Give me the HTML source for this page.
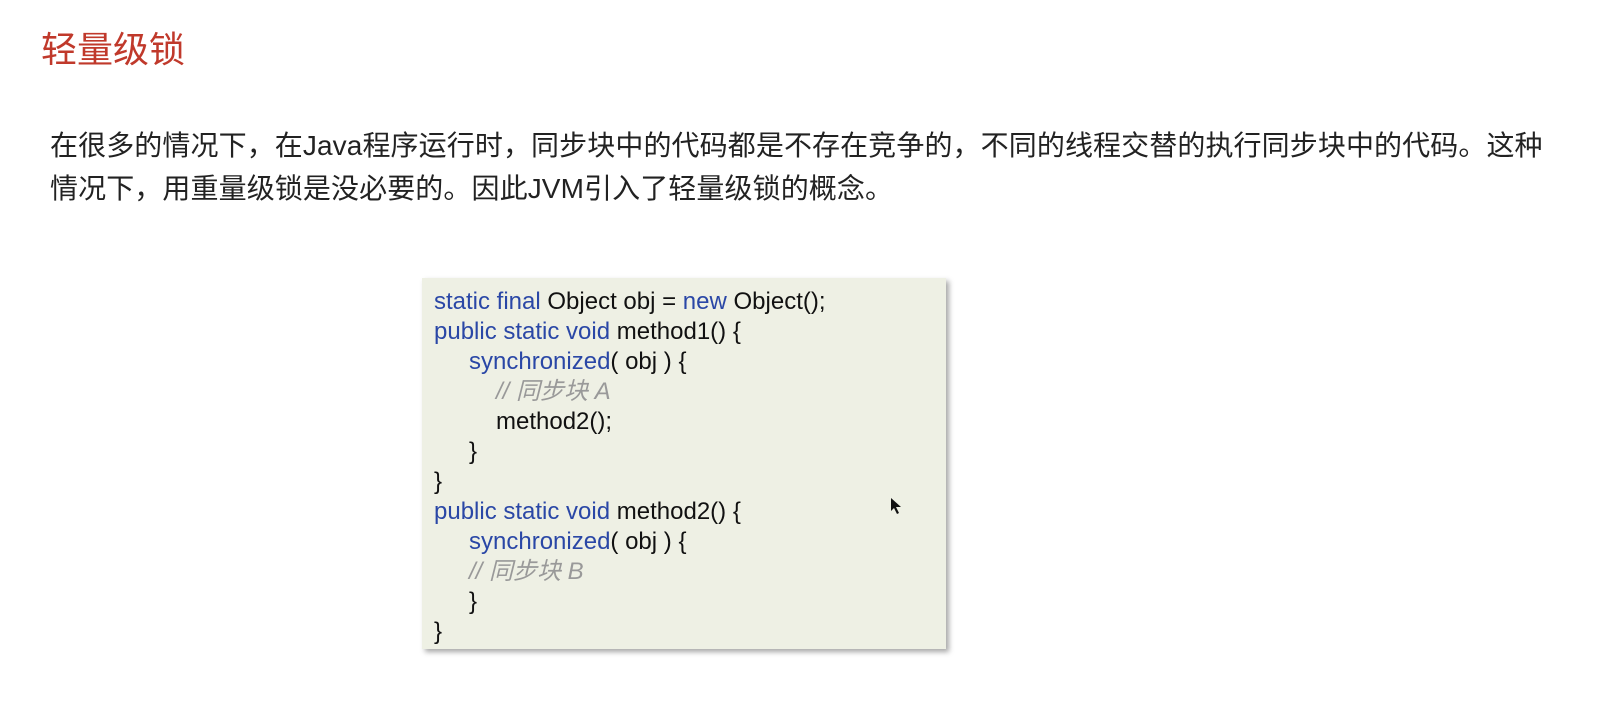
<!DOCTYPE html>
<html><head><meta charset="utf-8"><style>
body{margin:0;width:1604px;height:716px;background:#fff;position:relative;overflow:hidden;font-family:"Liberation Sans","Noto Sans CJK SC",sans-serif}
.t{position:absolute;left:41px;top:26px;font-size:36px;color:#c0392b;line-height:48px}
.p{position:absolute;left:50px;top:124px;font-size:28px;color:#222;line-height:43px;white-space:nowrap;width:1540px;letter-spacing:0.1px}
.box{position:absolute;left:422px;top:278px;width:524px;height:371px;background:#eef0e4;box-shadow:3px 3px 5px rgba(0,0,0,.35)}
.code{position:absolute;left:434px;top:287px;font-size:24px;line-height:30px;color:#111;white-space:pre}
.code div{height:30px}
.i1{padding-left:35px}.i2{padding-left:62px}
.k{color:#2a47a6}.c{color:#999;font-style:italic}
</style></head><body>
<div class="t">轻量级锁</div>
<div class="p">在很多的情况下，在Java程序运行时，同步块中的代码都是不存在竞争的，不同的线程交替的执行同步块中的代码。这种<br>情况下，用重量级锁是没必要的。因此JVM引入了轻量级锁的概念。</div>
<div class="box"></div>
<div class="code"><div><span class="k">static final</span> Object obj = <span class="k">new</span> Object();</div><div><span class="k">public static void</span> method1() {</div><div class="i1"><span class="k">synchronized</span>( obj ) {</div><div class="i2"><span class="c">// 同步块 A</span></div><div class="i2">method2();</div><div class="i1">}</div><div>}</div><div><span class="k">public static void</span> method2() {</div><div class="i1"><span class="k">synchronized</span>( obj ) {</div><div class="i1"><span class="c">// 同步块 B</span></div><div class="i1">}</div><div>}</div></div>
<svg style="position:absolute;left:890px;top:497px" width="14" height="18"><path d="M1 1 L1 14 L4 11 L7 17 L9 16 L6 10 L11 10 Z" fill="#111"/></svg>
</body></html>
